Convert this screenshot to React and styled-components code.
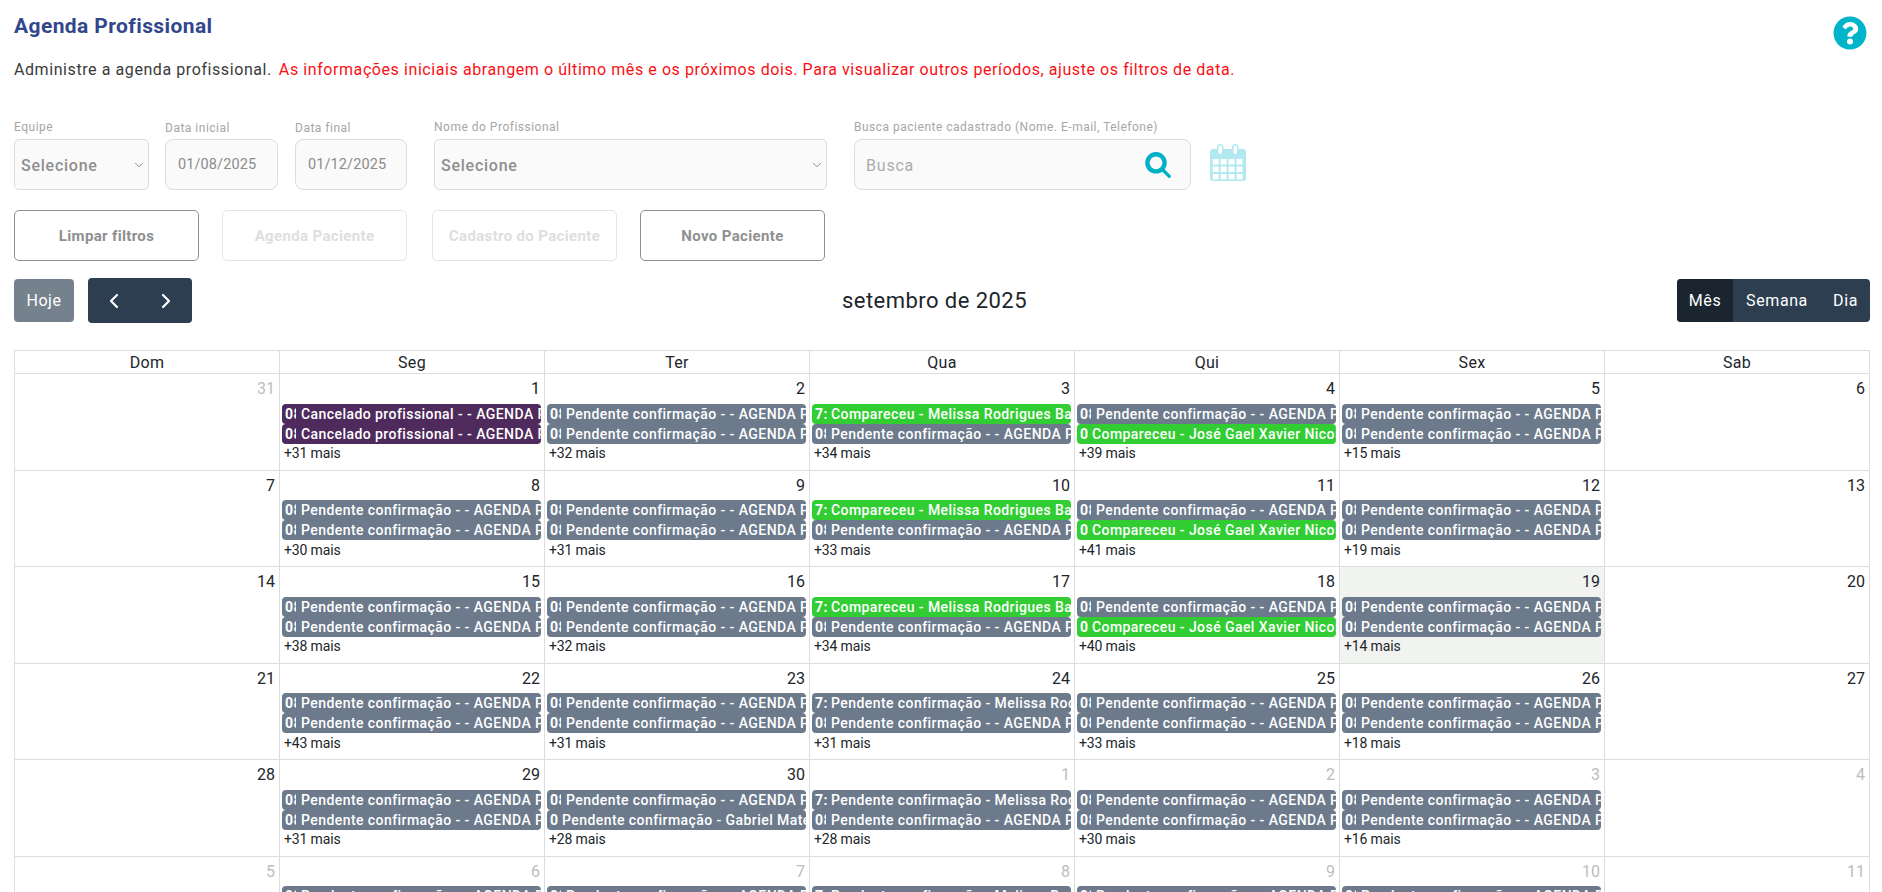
import React from "react";
import styled, { createGlobalStyle } from "styled-components";
import { FaQuestionCircle } from "react-icons/fa";
import { ChevronLeft, ChevronRight, ChevronDown } from "lucide-react";

const Global = createGlobalStyle`
  html, body { margin: 0; height: 100%; overflow: hidden; background: #fff; }
  body { font-family: Roboto, "Liberation Sans", sans-serif; color: #212529; }
  * { box-sizing: border-box; }
`;

const Page = styled.div`
  padding: 14px 12px 0 14px;
  height: 892px;
  overflow: hidden;
`;
const TitleRow = styled.div`
  display: flex;
  justify-content: space-between;
  align-items: flex-start;
  height: 24px;
  padding-right: 3px;
`;
const Title = styled.h1`
  margin: 0;
  font-size: 21px;
  line-height: 24px;
  font-weight: 700;
  letter-spacing: 0.4px;
  color: #32468c;
`;
const HelpIcon = styled(FaQuestionCircle)`
  font-size: 34px;
  color: #00b5c9;
  margin-top: 2px;
`;
const Description = styled.p`
  margin: 20px 0 0;
  font-size: 16px;
  line-height: 24px;
  letter-spacing: 0.58px;
  color: #3a3a3a;
  white-space: nowrap;
`;
const Alert = styled.span`
  color: #fb0f14;
  margin-left: 7px;
`;
const Filters = styled.div`
  display: flex;
  align-items: flex-start;
  margin-top: 37px;
`;
const Field = styled.label`
  display: flex;
  flex-direction: column;
  width: ${(p) => p.$w}px;
  margin-left: ${(p) => p.$ml || 0}px;
`;
const FieldLabel = styled.span`
  height: 16px;
  margin-bottom: 4px;
  padding-top: ${(p) => (p.$low ? 1 : 0)}px;
  font-size: 12px;
  line-height: 16px;
  letter-spacing: 0.5px;
  color: #a6a6a6;
  white-space: nowrap;
`;
const SelectWrap = styled.div`
  position: relative;
  height: 51px;
  color: #7d7d7d;
`;
const Select = styled.select`
  appearance: none;
  display: block;
  height: 51px;
  width: 100%;
  padding: 2px 0 0 6px;
  border: 1px solid #dcdcdc;
  border-radius: 5px;
  background: #fafafa;
  font: 500 16px Roboto, sans-serif;
  letter-spacing: 0.75px;
  color: #8f8f8f;
`;
const SelectArrow = styled(ChevronDown)`
  position: absolute;
  top: 19px;
  right: 3px;
  width: 14px;
  height: 14px;
  stroke-width: 1.5;
  pointer-events: none;
`;
const DateInput = styled.input`
  height: 51px;
  width: 100%;
  padding: 0 12px;
  border: 1px solid #dcdcdc;
  border-radius: 8px;
  background: #fafafa;
  font: 400 14.5px Roboto, sans-serif;
  letter-spacing: 0.1px;
  color: #8c8c8c;
`;
const SearchBox = styled.div`
  display: flex;
  align-items: center;
  justify-content: space-between;
  height: 51px;
  padding: 0 19px 0 11px;
  border: 1px solid #dcdcdc;
  border-radius: 8px;
  background: #fafafa;
`;
const SearchInput = styled.input`
  border: 0;
  outline: 0;
  padding: 2px 0 0;
  background: transparent;
  width: 200px;
  font: 400 16px Roboto, sans-serif;
  letter-spacing: 0.8px;
  &::placeholder { color: #acacac; opacity: 1; }
`;
const SearchIcon = styled.svg`
  width: 26px;
  height: 26px;
  flex: none;
  margin-top: 1px;
`;
const CalendarIcon = styled.svg`
  width: 36px;
  height: 38px;
  margin: 25px 0 0 19px;
  flex: none;
`;
const Actions = styled.div`
  display: flex;
  gap: 23px;
  margin-top: 20px;
`;
const ActionButton = styled.button`
  width: 185px;
  height: 51px;
  padding: 0;
  margin-left: ${(p) => p.$ml || 0}px;
  background: #fff;
  border: 1px solid ${(p) => (p.disabled ? "#e5e5e5" : "#8f8f8f")};
  border-radius: 5px;
  font: 700 15px Roboto, sans-serif;
  letter-spacing: 0.35px;
  color: ${(p) => (p.disabled ? "#dedede" : "#8f8f8f")};
`;
const Toolbar = styled.div`
  display: flex;
  justify-content: space-between;
  align-items: center;
  height: 45px;
  margin-top: 17px;
`;
const LeftTools = styled.div`
  display: flex;
  align-items: center;
  gap: 14px;
`;
const TodayButton = styled.button`
  width: 60px;
  height: 43px;
  border: 0;
  padding: 0;
  border-radius: 4px;
  background: #76818e;
  color: #fff;
  font: 400 16px Roboto, sans-serif;
  letter-spacing: 0.5px;
`;
const NavGroup = styled.div`
  display: flex;
  width: 104px;
  height: 45px;
  border-radius: 4px;
  background: #2c3e50;
`;
const NavButton = styled.button`
  flex: 1;
  display: flex;
  align-items: center;
  justify-content: center;
  border: 0;
  padding: 0;
  background: transparent;
  color: #fff;
`;
const MonthTitle = styled.h2`
  margin: 0;
  font-size: 22px;
  line-height: 45px;
  font-weight: 400;
  letter-spacing: 0.45px;
  color: #212529;
`;
const ViewGroup = styled.div`
  display: flex;
  height: 43px;
  border-radius: 4px;
  overflow: hidden;
  background: #2c3e50;
`;
const ViewButton = styled.button`
  width: ${(p) => p.$w}px;
  border: 0;
  padding: 0;
  background: ${(p) => (p.$active ? "#1a252f" : "transparent")};
  color: #fff;
  font: 400 16px Roboto, sans-serif;
  letter-spacing: 0.6px;
`;
const Calendar = styled.div`
  margin-top: 27px;
  width: 1856px;
  border-left: 1px solid #ddd;
`;
const Row = styled.div`
  display: grid;
  grid-template-columns: repeat(6, 265px) 1fr;
`;
const HeadCell = styled.div`
  height: 24px;
  border: solid #ddd;
  border-width: 1px 1px 1px 0;
  text-align: center;
  font-size: 16px;
  line-height: 24px;
  letter-spacing: 0.3px;
  color: #212529;
`;
const DayCell = styled.div`
  height: 96.5px;
  min-width: 0;
  padding: 0 3px 0 2px;
  border: solid #ddd;
  border-width: 0 1px 1px 0;
  background: ${(p) => (p.$today ? "#f1f3f1" : "#fff")};
`;
const DayNumber = styled.div`
  height: 29.5px;
  padding: 5px 1px 0 0;
  text-align: right;
  font-size: 16px;
  line-height: 20px;
  color: ${(p) => (p.$other ? "#bdbdbd" : "#212529")};
`;
const Event = styled.div`
  display: flex;
  height: 20px;
  margin-bottom: 0.4px;
  padding: 0 1px 0 3px;
  border-radius: 4px;
  overflow: hidden;
  white-space: nowrap;
  background: ${(p) => ({ cancel: "#4f2a5c", pending: "#6c7a8c", done: "#32cd32" }[p.$kind])};
  color: #fff;
  font-size: 14px;
  line-height: 20px;
  letter-spacing: 0.43px;
  font-weight: 500;
`;
const EventTime = styled.span`
  flex: none;
  width: ${(p) => p.$w}px;
  margin-right: ${(p) => p.$gap}px;
  overflow: hidden;
  font-weight: 700;
`;
const EventTitle = styled.span`
  flex: none;
`;
const More = styled.div`
  padding-left: 2px;
  font-size: 14px;
  line-height: 18px;
  letter-spacing: -0.15px;
  color: #212529;
`;

const P = { kind: "pending", time: "08:00", w: 11, gap: 5, title: "Pendente confirmação - - AGENDA PROFISSIONAL" };
const C = { kind: "cancel", time: "08:00", w: 11, gap: 5, title: "Cancelado profissional - - AGENDA PROFISSIONAL" };
const GM = { kind: "done", time: "7:30", w: 12, gap: 4, title: "Compareceu - Melissa Rodrigues Barbosa" };
const GJ = { kind: "done", time: "08:00", w: 8, gap: 4, title: "Compareceu - José Gael Xavier Nicolau" };
const PM = { kind: "pending", time: "7:30", w: 12, gap: 4, title: "Pendente confirmação - Melissa Rodrigues Barbosa" };
const PG = { kind: "pending", time: "08:00", w: 8, gap: 4, title: "Pendente confirmação - Gabriel Mateus Lima" };

const rows = [
  [{ d: 31, o: 1 }, { d: 1, e: [C, C], m: 31 }, { d: 2, e: [P, P], m: 32 }, { d: 3, e: [GM, P], m: 34 }, { d: 4, e: [P, GJ], m: 39 }, { d: 5, e: [P, P], m: 15 }, { d: 6 }],
  [{ d: 7 }, { d: 8, e: [P, P], m: 30 }, { d: 9, e: [P, P], m: 31 }, { d: 10, e: [GM, P], m: 33 }, { d: 11, e: [P, GJ], m: 41 }, { d: 12, e: [P, P], m: 19 }, { d: 13 }],
  [{ d: 14 }, { d: 15, e: [P, P], m: 38 }, { d: 16, e: [P, P], m: 32 }, { d: 17, e: [GM, P], m: 34 }, { d: 18, e: [P, GJ], m: 40 }, { d: 19, e: [P, P], m: 14, t: 1 }, { d: 20 }],
  [{ d: 21 }, { d: 22, e: [P, P], m: 43 }, { d: 23, e: [P, P], m: 31 }, { d: 24, e: [PM, P], m: 31 }, { d: 25, e: [P, P], m: 33 }, { d: 26, e: [P, P], m: 18 }, { d: 27 }],
  [{ d: 28 }, { d: 29, e: [P, P], m: 31 }, { d: 30, e: [P, PG], m: 28 }, { d: 1, o: 1, e: [PM, P], m: 28 }, { d: 2, o: 1, e: [P, P], m: 30 }, { d: 3, o: 1, e: [P, P], m: 16 }, { d: 4, o: 1 }],
  [{ d: 5, o: 1 }, { d: 6, o: 1, e: [P, P], m: 30 }, { d: 7, o: 1, e: [P, P], m: 30 }, { d: 8, o: 1, e: [PM, P], m: 30 }, { d: 9, o: 1, e: [P, P], m: 30 }, { d: 10, o: 1, e: [P, P], m: 15 }, { d: 11, o: 1 }],
];

const CalendarGlyph = () => (
  <CalendarIcon viewBox="0 0 36 38" aria-hidden="true">
    <rect x="0" y="5" width="36" height="32" rx="3" fill="#b2e9f0" />
    <rect x="7.7" y="0.8" width="5" height="10" rx="2.5" fill="#fff" stroke="#b2e9f0" strokeWidth="1.5" />
    <rect x="22.8" y="0.8" width="5" height="10" rx="2.5" fill="#fff" stroke="#b2e9f0" strokeWidth="1.5" />
    {[15, 22.5, 30].map((y) =>
      [2.7, 10.6, 18.5, 26.6].map((x) => <rect key={`${x}-${y}`} x={x} y={y} width="6" height="5.5" fill="#fff" />)
    )}
  </CalendarIcon>
);

const SearchGlyph = () => (
  <SearchIcon viewBox="0 0 26 26" aria-hidden="true">
    <circle cx="11" cy="10.8" r="8.6" fill="none" stroke="#00b0c6" strokeWidth="4.4" />
    <line x1="18" y1="18" x2="24.3" y2="24.3" stroke="#00b0c6" strokeWidth="3.2" strokeLinecap="round" />
  </SearchIcon>
);

const FilterSelect = () => (
  <SelectWrap>
    <Select defaultValue=""><option value="">Selecione</option></Select>
    <SelectArrow />
  </SelectWrap>
);

export default function App() {
  return (
    <Page>
      <Global />
      <TitleRow>
        <Title>Agenda Profissional</Title>
        <HelpIcon />
      </TitleRow>
      <Description>
        Administre a agenda profissional.
        <Alert>As informações iniciais abrangem o último mês e os próximos dois. Para visualizar outros períodos, ajuste os filtros de data.</Alert>
      </Description>
      <Filters>
        <Field $w={135}>
          <FieldLabel>Equipe</FieldLabel>
          <FilterSelect />
        </Field>
        <Field $w={113} $ml={16}>
          <FieldLabel $low>Data inicial</FieldLabel>
          <DateInput readOnly value="01/08/2025" />
        </Field>
        <Field $w={112} $ml={17}>
          <FieldLabel $low>Data final</FieldLabel>
          <DateInput readOnly value="01/12/2025" />
        </Field>
        <Field $w={393} $ml={27}>
          <FieldLabel>Nome do Profissional</FieldLabel>
          <FilterSelect />
        </Field>
        <Field $w={337} $ml={27}>
          <FieldLabel>Busca paciente cadastrado (Nome. E-mail, Telefone)</FieldLabel>
          <SearchBox>
            <SearchInput placeholder="Busca" />
            <SearchGlyph />
          </SearchBox>
        </Field>
        <CalendarGlyph />
      </Filters>
      <Actions>
        <ActionButton>Limpar filtros</ActionButton>
        <ActionButton disabled>Agenda Paciente</ActionButton>
        <ActionButton disabled $ml={2}>Cadastro do Paciente</ActionButton>
        <ActionButton>Novo Paciente</ActionButton>
      </Actions>
      <Toolbar>
        <LeftTools>
          <TodayButton>Hoje</TodayButton>
          <NavGroup>
            <NavButton><ChevronLeft size={24} strokeWidth={2.2} /></NavButton>
            <NavButton><ChevronRight size={24} strokeWidth={2.2} /></NavButton>
          </NavGroup>
        </LeftTools>
        <MonthTitle>setembro de 2025</MonthTitle>
        <ViewGroup>
          <ViewButton $w={56} $active>Mês</ViewButton>
          <ViewButton $w={88}>Semana</ViewButton>
          <ViewButton $w={49}>Dia</ViewButton>
        </ViewGroup>
      </Toolbar>
      <Calendar>
        <Row>
          {["Dom", "Seg", "Ter", "Qua", "Qui", "Sex", "Sab"].map((n) => <HeadCell key={n}>{n}</HeadCell>)}
        </Row>
        {rows.map((r, i) => (
          <Row key={i}>
            {r.map((c, j) => (
              <DayCell key={j} $today={c.t}>
                <DayNumber $other={c.o}>{c.d}</DayNumber>
                {c.e && c.e.map((e, k) => (
                  <Event key={k} $kind={e.kind}>
                    <EventTime $w={e.w} $gap={e.gap}>{e.time}</EventTime>
                    <EventTitle>{e.title}</EventTitle>
                  </Event>
                ))}
                {c.m && <More>+{c.m} mais</More>}
              </DayCell>
            ))}
          </Row>
        ))}
      </Calendar>
    </Page>
  );
}
